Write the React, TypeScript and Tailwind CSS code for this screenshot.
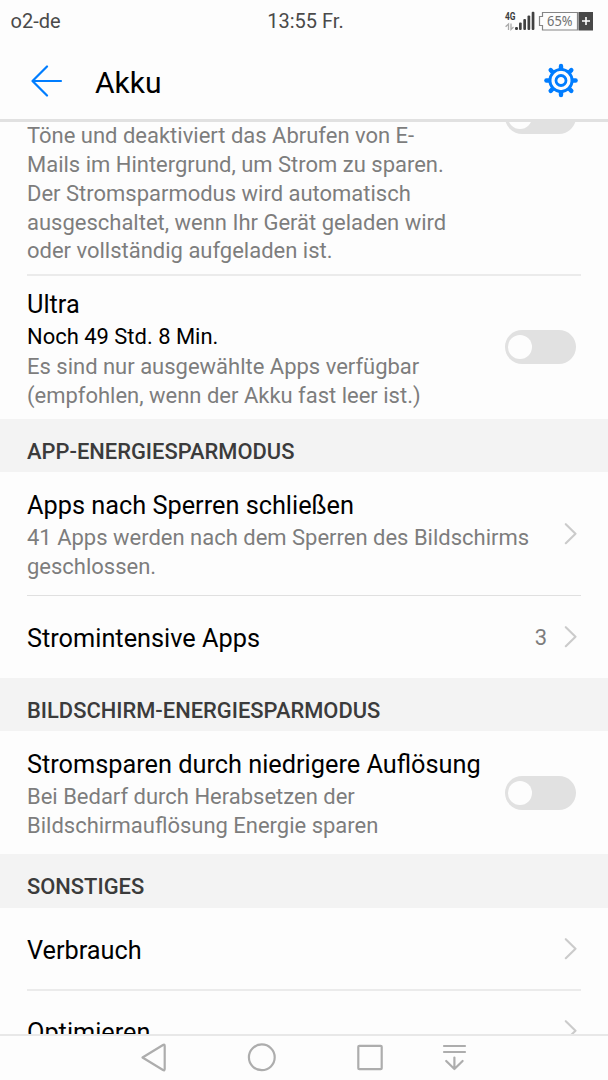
import type { ReactNode } from 'react';
import clsx from 'clsx';

interface RowProps {
  title: string;
  remaining?: string;
  lines?: string[];
  children?: ReactNode;
  className?: string;
}

function Toggle({ className }: { className?: string }) {
  return (
    <button
      type="button"
      role="switch"
      aria-checked="false"
      className={clsx('flex h-[34px] w-[71px] shrink-0 items-center rounded-full bg-[#e1e1e1] pl-[3px]', className)}
    >
      <span className="size-6 rounded-full bg-[#fdfdfd]" />
    </button>
  );
}

function Chevron() {
  return (
    <svg className="h-[22px] w-[14px] shrink-0" viewBox="0 0 14 22" fill="none" stroke="#cbcbcb" strokeWidth="2.1" strokeLinecap="round" strokeLinejoin="round">
      <path d="M1.8 1.2 L11.5 10.7 L1.8 20.2" />
    </svg>
  );
}

function Description({ lines, className }: { lines: string[]; className?: string }) {
  return (
    <p className={clsx('text-[21.99px] leading-[28.75px] text-[#7d7d7d]', className)}>
      {lines.map((line) => (
        <span key={line} className="block whitespace-nowrap">
          {line}
        </span>
      ))}
    </p>
  );
}

function Row({ title, remaining, lines, children, className }: RowProps) {
  return (
    <div className={clsx('flex shrink-0 items-center justify-between', className)}>
      <div className="pt-1 whitespace-nowrap">
        <h3 className="text-[25.3px] leading-8 text-black">{title}</h3>
        {remaining && <p className="mt-px text-[21.96px] leading-[30px] text-black">{remaining}</p>}
        {lines && <Description lines={lines} className={remaining ? 'mt-px' : 'mt-0.5'} />}
      </div>
      {children}
    </div>
  );
}

function SectionHeader({ children, className }: { children: string; className?: string }) {
  return (
    <h2 className={clsx('flex shrink-0 items-center bg-[#f3f3f3] pt-[13.5px] pl-[27px] text-[21.9px] font-medium text-[#3b3b3b]', className)}>
      {children}
    </h2>
  );
}

function Divider({ className }: { className?: string }) {
  return <hr className={clsx('mr-[27px] ml-[27px] shrink-0 border-0', className)} />;
}

function StatusIcons() {
  return (
    <svg className="h-6 w-[92px]" viewBox="503 8 92 24">
      <text x="505" y="19" fontSize="11" fontWeight="700" fill="#3c3c3c" textLength="10.5" lengthAdjust="spacingAndGlyphs">
        4G
      </text>
      <g stroke="#aaa" strokeWidth="1.3" fill="none">
        <path d="M508.5 29V23L505.6 25.8M511 22.5V28.5L513.5 26" />
      </g>
      <g fill="#414141">
        <rect x="515" y="26" width="3" height="3" rx="1.2" />
        <rect x="519" y="21.5" width="2.7" height="7.5" rx="1" />
        <rect x="523.3" y="18" width="2.7" height="11" rx="1" />
        <rect x="527.5" y="14.5" width="2.7" height="14.5" rx="1" />
        <rect x="531.7" y="10.7" width="2.7" height="18.3" rx="1" />
      </g>
      <path d="M577.5 11.5H542.5V15.5H539.5V24.5H542.5V29H577.5Z" fill="none" stroke="#858585" strokeWidth="1.2" />
      <text x="547" y="24.7" fontSize="13.8" fill="#707070" fontFamily="Noto Sans, sans-serif" textLength="25.5" lengthAdjust="spacingAndGlyphs">
        65%
      </text>
      <rect x="578.5" y="11" width="14.5" height="18.5" fill="#484848" />
      <path d="M582 20H590M586 16V24" stroke="#fff" strokeWidth="1.6" />
    </svg>
  );
}

const TEETH = [0, 45, 90, 135, 180, 225, 270, 315];

function GearIcon() {
  return (
    <svg className="size-9" viewBox="-18 -17.5 36 36" fill="none" stroke="#007dff">
      <circle r="11.1" strokeWidth="2.9" />
      <circle r="5" strokeWidth="2.8" />
      {TEETH.map((angle) => (
        <path key={angle} d="M0 -12V-14.6" transform={`rotate(${angle})`} strokeWidth="4.4" strokeLinecap="round" />
      ))}
    </svg>
  );
}

function NavBar() {
  return (
    <nav className="h-[46px] shrink-0 border-t-2 border-[#e8e8e8]">
      <svg className="h-11 w-full" viewBox="0 1036 608 44" fill="none" stroke="#adadad" strokeWidth="2.2" strokeLinecap="round" strokeLinejoin="round">
        <path d="M142.5 1057.5 L163 1045 Q164.7 1044 164.7 1046 V1069 Q164.7 1071 163 1070 Z" />
        <circle cx="261.8" cy="1057.3" r="12.9" />
        <rect x="358.3" y="1045.8" width="23.4" height="23.4" rx="1" />
        <path d="M444 1046H465M444 1052H465M454.4 1057.5V1069M446.2 1061L454.4 1069L462.6 1061" />
      </svg>
    </nav>
  );
}

export default function App() {
  return (
    <div className="flex h-[1080px] w-[608px] flex-col overflow-hidden bg-[#fdfdfd] font-['Roboto',sans-serif]">
      <div className="grid h-[42px] shrink-0 grid-cols-[1fr_auto_1fr] items-center pr-[13px] pl-[10px] text-[20px] text-[#4a4a4a]">
        <span className="pl-[0.5px]">o2-de</span>
        <span className="pl-1.5">13:55 Fr.</span>
        <div className="flex justify-end">
          <StatusIcons />
        </div>
      </div>

      <header className="flex h-20 shrink-0 items-center border-b-3 border-[#e1e1e1] pr-[29px] pl-[30px]">
        <svg className="h-8 w-[34px]" viewBox="0 0 34 32" fill="none" stroke="#007dff" strokeWidth="2.2" strokeLinecap="round" strokeLinejoin="round">
          <path d="M31 16H2.5M17 1.5L2.5 16L17 30.5" />
        </svg>
        <h1 className="ml-[31px] flex-1 pt-1 text-[30px] leading-9 text-black">Akku</h1>
        <GearIcon />
      </header>

      <main className="flex min-h-0 flex-1 flex-col overflow-hidden">
        <div className="flex h-[152px] shrink-0 items-start justify-between pr-8 pl-[27px]">
          <Description
            className="pt-[0.25px]"
            lines={[
              'Töne und deaktiviert das Abrufen von E-',
              'Mails im Hintergrund, um Strom zu sparen.',
              'Der Stromsparmodus wird automatisch',
              'ausgeschaltet, wenn Ihr Gerät geladen wird',
              'oder vollständig aufgeladen ist.',
            ]}
          />
          <Toggle className="-mt-[22px]" />
        </div>
        <Divider className="h-0.5 bg-[#ebebeb]" />
        <Row
          title="Ultra"
          remaining="Noch 49 Std. 8 Min."
          lines={['Es sind nur ausgewählte Apps verfügbar', '(empfohlen, wenn der Akku fast leer ist.)']}
          className="h-[143px] pr-8 pl-[27px]"
        >
          <Toggle className="-mt-px" />
        </Row>

        <SectionHeader className="h-[53px]">APP-ENERGIESPARMODUS</SectionHeader>
        <Row
          title="Apps nach Sperren schließen"
          lines={['41 Apps werden nach dem Sperren des Bildschirms', 'geschlossen.']}
          className="h-[123px] pt-px pr-[30px] pl-[27px]"
        >
          <Chevron />
        </Row>
        <Divider className="h-px bg-[#e0e0e0]" />
        <Row title="Stromintensive Apps" className="h-[82px] pr-[30px] pl-[27px]">
          <div className="flex items-center gap-[17px]">
            <span className="pt-[3px] text-[21.96px] text-[#7d7d7d]">3</span>
            <Chevron />
          </div>
        </Row>

        <SectionHeader className="h-[53px]">BILDSCHIRM-ENERGIESPARMODUS</SectionHeader>
        <Row
          title="Stromsparen durch niedrigere Auflösung"
          lines={['Bei Bedarf durch Herabsetzen der', 'Bildschirmauflösung Energie sparen']}
          className="h-[123px] pt-px pr-8 pl-[27px]"
        >
          <Toggle className="-mt-px" />
        </Row>

        <SectionHeader className="h-[54px]">SONSTIGES</SectionHeader>
        <Row title="Verbrauch" className="h-[81px] pr-[30px] pl-[27px]">
          <Chevron />
        </Row>
        <Divider className="h-0.5 bg-[#ebebeb]" />
        <Row title="Optimieren" className="h-[80px] pr-[30px] pl-[27px]">
          <Chevron />
        </Row>
      </main>

      <NavBar />
    </div>
  );
}
